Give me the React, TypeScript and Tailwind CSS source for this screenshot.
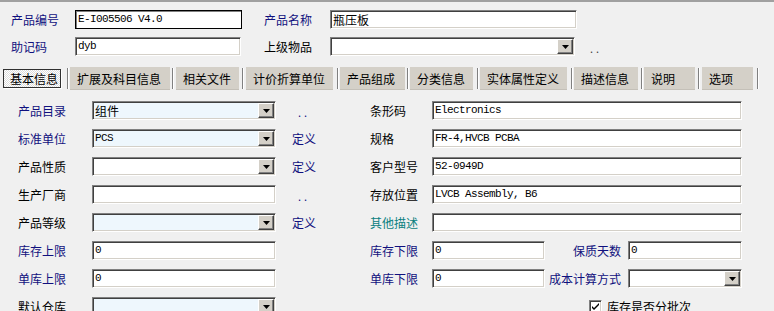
import React from 'react';

// Windows classic sunken edit box
const sunken =
  'border border-t-[#808080] border-l-[#808080] border-r-white border-b-white shadow-[inset_1px_1px_0_#404040,inset_-1px_-1px_0_#d4d0c8]';

const cjk = "font-['Noto_Sans_CJK_SC',sans-serif]";
const mono = "font-['Liberation_Mono','Noto_Sans_CJK_SC',monospace] text-[11px] tracking-[-0.6px]";

const DownArrow = () => (
  <svg width="7" height="4" viewBox="0 0 7 4">
    <path d="M0 0h7L3.5 4z" fill="#000" />
  </svg>
);

interface FieldProps {
  w: string;
  value?: string;
  blue?: boolean;
  combo?: boolean;
  zh?: boolean;
  focus?: boolean;
}

function Field({ w, value = '', blue, combo, zh, focus }: FieldProps) {
  const frame = focus
    ? 'border border-black shadow-[inset_1px_1px_0_#808080]'
    : sunken;
  return (
    <div className={`${w} h-[19px] flex items-stretch ${frame} ${blue ? 'bg-[#eef7fd]' : 'bg-white'}`}>
      <div
        className={`flex-1 flex items-center pl-[2px] overflow-hidden whitespace-nowrap text-black ${
          zh ? `${cjk} text-[12px]` : mono
        }`}
      >
        {value}
      </div>
      {combo && (
        <div className="w-[16px] my-[1px] mr-[1px] flex items-center justify-center bg-[#d4d0c8] border border-t-white border-l-white border-b-[#404040] border-r-[#404040] shadow-[inset_-1px_-1px_0_#808080]">
          <DownArrow />
        </div>
      )}
    </div>
  );
}

const navy = 'text-[#10107e]';

function Label({ text, w, color = 'text-black', right }: { text: string; w: string; color?: string; right?: boolean }) {
  return (
    <div className={`${w} ${color} text-[12px] leading-none whitespace-nowrap ${right ? 'text-right pr-[7px]' : ''}`}>
      {text}
    </div>
  );
}

const Dots = ({ className = '' }: { className?: string }) => (
  <div className={`self-end mb-[3px] text-[11px] leading-[10px] tracking-[3px] ${className}`}>..</div>
);

const DefLink = () => <div className={`ml-[16px] text-[12px] leading-none ${navy}`}>定义</div>;

const Sep = ({ ml }: { ml: string }) => (
  <div className={`${ml} w-[2px] h-[21px] self-center border-l border-l-[#808080] border-r border-r-white`} />
);

function Tab({ text, w, ml }: { text: string; w: string; ml: string }) {
  return (
    <div className={`${ml} ${w} h-[23px] bg-[#d4d0c8] flex items-center pl-[7px] text-[12px] text-black whitespace-nowrap shadow-[inset_0_-1px_0_#c4c0b8]`}>
      {text}
    </div>
  );
}

export default function App() {
  return (
    <div className={`w-[774px] h-[311px] overflow-hidden bg-[#f0f0f0] border-t-2 border-t-[#a0a0a0] ${cjk} select-none`}>
      {/* 表头 */}
      <div className="pl-[11px] pt-[8px]">
        <div className="flex items-center h-[19px]">
          <Label text="产品编号" w="w-[64px]" color={navy} />
          <Field w="w-[167px]" value="E-I005506 V4.0" focus />
          <Label text="产品名称" w="ml-[22px] w-[66px]" color={navy} />
          <Field w="w-[247px]" value="瓶压板" zh />
        </div>
        <div className="flex items-center h-[19px] mt-[8px]">
          <Label text="助记码" w="w-[64px]" color={navy} />
          <Field w="w-[166px]" value="dyb" />
          <Label text="上级物品" w="ml-[23px] w-[66px]" />
          <Field w="w-[245px]" combo />
          <Dots className="ml-[15px] text-[#404040]" />
        </div>
      </div>

      {/* 页签 */}
      <div className="flex items-center h-[23px] mt-[11px] pl-[3px]">
        <div className="w-[58px] h-[19px] flex items-center pl-[6px] text-[12px] text-black border border-[#303030] shadow-[1px_1px_0_#fff] bg-[repeating-conic-gradient(#ffffff_0_25%,#dcdcdc_0_50%)] bg-[length:2px_2px]">
          基本信息
        </div>
        <Sep ml="ml-[6px]" />
        <Tab text="扩展及科目信息" w="w-[100px]" ml="ml-[1px]" />
        <Sep ml="ml-[2px]" />
        <Tab text="相关文件" w="w-[63px]" ml="ml-[2px]" />
        <Sep ml="ml-[3px]" />
        <Tab text="计价折算单位" w="w-[87px]" ml="ml-[2px]" />
        <Sep ml="ml-[4px]" />
        <Tab text="产品组成" w="w-[65px]" ml="ml-[1px]" />
        <Sep ml="ml-[2px]" />
        <Tab text="分类信息" w="w-[63px]" ml="ml-[1px]" />
        <Sep ml="ml-[4px]" />
        <Tab text="实体属性定义" w="w-[87px]" ml="ml-[1px]" />
        <Sep ml="ml-[4px]" />
        <Tab text="描述信息" w="w-[64px]" ml="ml-[1px]" />
        <Sep ml="ml-[3px]" />
        <Tab text="说明" w="w-[51px]" ml="ml-[1px]" />
        <Sep ml="ml-[3px]" />
        <Tab text="选项" w="w-[51px]" ml="ml-[2px]" />
        <Sep ml="ml-[4px]" />
      </div>

      {/* 基本信息 */}
      <div className="flex flex-col gap-[9px] pt-[11px]">
        <div className="flex items-center h-[19px]">
          <div className="flex items-center w-[370px] h-full pl-[18px]">
            <Label text="产品目录" w="w-[74px]" color={navy} />
            <Field w="w-[184px]" value="组件" zh blue combo />
            <Dots className={`ml-[22px] ${navy}`} />
          </div>
          <Label text="条形码" w="w-[62px]" />
          <Field w="w-[310px]" value="Electronics" />
        </div>

        <div className="flex items-center h-[19px]">
          <div className="flex items-center w-[370px] h-full pl-[18px]">
            <Label text="标准单位" w="w-[74px]" color={navy} />
            <Field w="w-[184px]" value="PCS" blue combo />
            <DefLink />
          </div>
          <Label text="规格" w="w-[62px]" />
          <Field w="w-[310px]" value="FR-4,HVCB PCBA" />
        </div>

        <div className="flex items-center h-[19px]">
          <div className="flex items-center w-[370px] h-full pl-[18px]">
            <Label text="产品性质" w="w-[74px]" />
            <Field w="w-[184px]" combo />
            <DefLink />
          </div>
          <Label text="客户型号" w="w-[62px]" />
          <Field w="w-[310px]" value="52-0949D" />
        </div>

        <div className="flex items-center h-[19px]">
          <div className="flex items-center w-[370px] h-full pl-[18px]">
            <Label text="生产厂商" w="w-[74px]" />
            <Field w="w-[184px]" />
            <Dots className={`ml-[22px] ${navy}`} />
          </div>
          <Label text="存放位置" w="w-[62px]" />
          <Field w="w-[310px]" value="LVCB Assembly, B6" />
        </div>

        <div className="flex items-center h-[19px]">
          <div className="flex items-center w-[370px] h-full pl-[18px]">
            <Label text="产品等级" w="w-[74px]" />
            <Field w="w-[184px]" blue combo />
            <DefLink />
          </div>
          <Label text="其他描述" w="w-[62px]" color="text-[#0a8080]" />
          <Field w="w-[310px]" />
        </div>

        <div className="flex items-center h-[19px]">
          <div className="flex items-center w-[370px] h-full pl-[18px]">
            <Label text="库存上限" w="w-[74px]" color={navy} />
            <Field w="w-[184px]" value="0" />
          </div>
          <Label text="库存下限" w="w-[62px]" color={navy} />
          <Field w="w-[113px]" value="0" />
          <Label text="保质天数" w="w-[83px]" color={navy} right />
          <Field w="w-[114px]" value="0" />
        </div>

        <div className="flex items-center h-[19px]">
          <div className="flex items-center w-[370px] h-full pl-[18px]">
            <Label text="单库上限" w="w-[74px]" color={navy} />
            <Field w="w-[184px]" value="0" />
          </div>
          <Label text="单库下限" w="w-[62px]" color={navy} />
          <Field w="w-[113px]" value="0" />
          <Label text="成本计算方式" w="w-[83px]" color={navy} right />
          <Field w="w-[114px]" combo />
        </div>

        <div className="flex items-center h-[19px]">
          <div className="flex items-center w-[370px] h-full pl-[18px]">
            <Label text="默认仓库" w="w-[74px]" />
            <Field w="w-[184px]" blue combo />
          </div>
          <div className="ml-[219px] flex items-center">
            <div className={`w-[13px] h-[13px] bg-white flex items-center justify-center ${sunken}`}>
              <svg width="9" height="9" viewBox="0 0 9 9">
                <path d="M1 4l2 2 5-5v2L3 8 1 6z" fill="#000" />
              </svg>
            </div>
            <div className="ml-[5px] text-[12px] leading-none text-black">库存是否分批次</div>
          </div>
        </div>
      </div>
    </div>
  );
}
